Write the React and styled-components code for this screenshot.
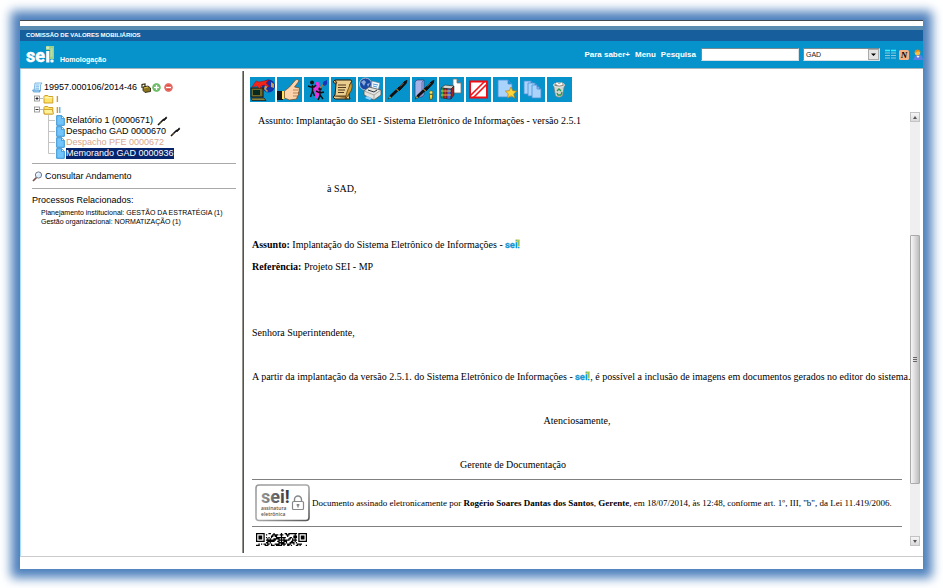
import React from "react";
import styled, { createGlobalStyle, css } from "styled-components";

const sans = '"Liberation Sans", Arial, sans-serif';
const serif = '"Liberation Serif", "Times New Roman", serif';
const logoFont = "Roboto, sans-serif";

const GlobalStyle = createGlobalStyle`
  *, *::before, *::after { box-sizing: border-box; }
  body { margin: 0; background: #fff; color: #000; font: 9px/12px ${sans}; }
  svg { display: block; flex: none; }
  button { padding: 0; border: 0; background: none; font: inherit; color: inherit; cursor: pointer; }
  a { color: inherit; text-decoration: none; }
  ul { margin: 0; padding: 0; list-style: none; }
`;

const Page = styled.div`
  display: flex;
  min-height: 100vh;
  padding: 20px;
`;

const Window = styled.div`
  flex: 1;
  min-width: 0;
  display: flex;
  flex-direction: column;
  background: #fff;
  border-top: 1px solid #404850;
  box-shadow: 0 0 10px 9px #4f81bd;
`;

const Institution = styled.div`
  height: 15px;
  margin-top: 5px;
  padding: 0 6px;
  border-top: 4px solid #5a8bb0;
  background: #165f9c;
  color: #fff;
  font-weight: bold;
  font-size: 6px;
  line-height: 11px;
`;

const Header = styled.header`
  display: flex;
  align-items: center;
  justify-content: space-between;
  height: 28px;
  padding-left: 6px;
  background: #0693cc;
  border-bottom: 1px solid #a3b4bc;
  color: #fff;
  font-weight: bold;
`;

const Brand = styled.div`
  display: flex;
  align-items: flex-end;
  gap: 6px;
  font-size: 7px;
  line-height: 8px;
`;

const Tools = styled.nav`
  display: flex;
  align-items: center;
  gap: 5px;
  font-size: 8px;
`;

const SearchBox = styled.input`
  width: 98px;
  height: 13px;
  padding: 0 2px;
  border: 1px solid #7a8890;
  border-right-color: #d8e0e4;
  border-bottom-color: #d8e0e4;
  border-radius: 0;
  background: #fff;
  font: 7px ${sans};
`;

const SelectWrap = styled.div`
  display: flex;
  align-items: center;
  width: 77px;
  height: 13px;
  margin-left: -1px;
  border: 1px solid #7a8890;
  border-right-color: #d8e0e4;
  border-bottom-color: #d8e0e4;
  background: #fff;
`;

const UnitSelect = styled.select`
  flex: 1;
  min-width: 0;
  height: 11px;
  padding: 0 2px;
  appearance: none;
  border: 0;
  background: transparent;
  color: #222;
  font: 7px/11px ${sans};
`;

const IconRow = styled.div`
  display: flex;
  align-items: center;
  gap: 3px;
`;

const Content = styled.div`
  flex: 1;
  display: flex;
  padding: 2px 0 3px;
  border-left: 1px solid #a8dff2;
  border-bottom: 1px solid #cbcbcb;
  margin-bottom: 12px;
`;

const Sidebar = styled.aside`
  flex: none;
  width: 221px;
  padding: 11px 6px 0 11px;
  white-space: nowrap;
`;

const Line = styled.div`
  display: flex;
  align-items: center;
  height: 11px;
  gap: ${(p) => p.$gap || 0}px;
  margin-left: ${(p) => p.$indent || 0}px;
`;

const DocLink = styled.a`
  margin-right: 3px;
  line-height: 11px;
  ${(p) => p.$muted && css`color: #d9a78e;`}
  ${(p) => p.$selected && css`background: #06246b; color: #fff;`}
`;

const FolderName = styled.span`
  padding-left: 2px;
  color: #7d6270;
`;

const Divider = styled.hr`
  margin: ${(p) => p.$top}px 0 0;
  border: 0;
  border-top: 1px solid #a9a9a9;
`;

const FollowUp = styled.a`
  display: flex;
  align-items: center;
  gap: 2px;
  margin-top: 6px;
  height: 12px;
`;

const Related = styled.section`
  padding-top: 5px;
  ul { padding: 2px 0 0 9px; font-size: 7px; line-height: 9px; }
`;

const Splitter = styled.div`
  flex: none;
  width: 2px;
  background: #55534d;
  border-left: 1px solid #96938c;
`;

const Main = styled.main`
  flex: 1;
  min-width: 0;
  display: flex;
  flex-direction: column;
  padding: 6px 3px 7px 6px;
`;

const Toolbar = styled.div`
  display: flex;
  gap: 2px;
`;

const ToolButton = styled.button`
  width: 25px;
  height: 25px;
  background: #0693cc;
`;

const Viewer = styled.div`
  flex: 1;
  display: flex;
  justify-content: space-between;
  padding-top: 10px;
`;

const Article = styled.article`
  flex: 1;
  min-width: 0;
  padding: 3px 8px 0 2px;
  font: 10px/12px ${serif};
  white-space: nowrap;
`;

const Paragraph = styled.p`
  margin: ${(p) => p.$top ?? 10}px 0 0;
  padding-left: ${(p) => p.$indent || 0}px;
  text-align: ${(p) => (p.$center ? "center" : "left")};
  svg { display: inline-block; vertical-align: -1px; }
`;

const Signature = styled.section`
  display: flex;
  align-items: center;
  gap: 2px;
  height: 48px;
  margin-top: 8px;
  padding-left: 3px;
  border-top: 1px solid #808080;
  border-bottom: 1px solid #808080;
  font-size: 9px;
`;

const CodeHolder = styled.div`
  padding: 6px 0 0 4px;
`;

const Scrollbar = styled.div`
  flex: none;
  display: flex;
  flex-direction: column;
  width: 10px;
  background: #efefef;
`;

const ScrollButton = styled.button`
  display: grid;
  place-items: center;
  height: 10px;
  border: 1px solid #c3c3c3;
  background: linear-gradient(#f6f6f6, #d9d9d9);
`;

const ScrollGap = styled.div`
  flex: ${(p) => p.$share} 0 0;
`;

const Thumb = styled.div`
  flex: 247 0 0;
  display: grid;
  place-items: center;
  border: 1px solid #aaa;
  border-radius: 1px;
  background: linear-gradient(90deg, #f6f6f6, #dedede 45%, #bcbcbc);
`;

function SeiLogo({ width, height, color, accent, dot }) {
  return (
    <svg width={width} height={height} viewBox="0 0 28 19" preserveAspectRatio="xMinYMid meet" overflow="visible" role="img" aria-label="sei!">
      <path d="M20 1h8v13h-4V5h-4z" fill={accent} />
      <text x="0" y="17.4" fontFamily={logoFont} fontWeight="700" fontSize="18" fill={color} stroke={color} strokeWidth=".5">se</text>
      <rect x="20.2" y="6" width="3.2" height="11.5" fill={color} />
      <rect x="20.2" y="1.5" width="3" height="2.5" rx="1" fill={color} opacity=".5" />
      <rect x="24.6" y="3" width="2" height="9" rx="1" fill={dot} opacity=".25" />
      <rect x="24.4" y="14.6" width="3.2" height="3" rx="1" fill={dot} />
    </svg>
  );
}

const Pen = () => (
  <svg width="11" height="10" viewBox="0 0 11 10">
    <path d="M1 9 7 3" stroke="#111" strokeWidth="1.6" />
    <path d="m6 4 3.2-3.2L10 2 7 5z" fill="#111" stroke="#111" strokeWidth=".5" />
    <path d="m2.5 7.4 1-1" stroke="#c7a51e" strokeWidth=".7" />
  </svg>
);

const Folder = ({ open }) => (
  <svg width="11" height="10" viewBox="0 0 11 10">
    <path d="M1 2.5 1.8 1.5h3l1 1h4v6.5H1z" fill="#ffe266" stroke="#c9981a" strokeWidth=".9" />
    {open ? <path d="M.5 4.5h8.7L10.5 9H1.5z" fill="#fff09a" stroke="#c9981a" strokeWidth=".8" />
      : <path d="M1.4 3.8h8" stroke="#fffbd0" />}
  </svg>
);

const Toggle = ({ plus }) => (
  <svg width="9" height="11" viewBox="0 0 9 11">
    <path d="M6 5.5h3" stroke="#bbb" />
    <rect x=".5" y="3" width="5" height="5" fill="#fff" stroke="#888" strokeWidth=".8" />
    <path d={plus ? "M1.5 5.5h3M3 4v3" : "M1.5 5.5h3"} stroke="#000" strokeWidth=".8" />
  </svg>
);

const PageIcon = () => (
  <svg width="9" height="11" viewBox="0 0 9 11">
    <path d="M.7.7h5l2.6 2.6v7H.7z" fill="#72c5fb" stroke="#2588cf" strokeWidth=".9" />
    <path d="M5.5.7v2.8h2.8" fill="#dff3ff" stroke="#2588cf" strokeWidth=".7" />
  </svg>
);

const Branch = ({ last }) => (
  <svg width="7" height="11" viewBox="0 0 7 11">
    <path d={last ? "M.5 0v5.5H7" : "M.5 0v11M.5 5.5H7"} stroke="#c4c4c4" fill="none" />
  </svg>
);

const ProcessIcon = () => (
  <svg width="11" height="11" viewBox="0 0 11 11">
    <path d="M3 1h7L8.5 3v6H2z" fill="#e7f6ff" stroke="#62a8dc" strokeWidth=".8" />
    <path d="M.6 8h6.6L8 10H1.5z" fill="#a5d6f8" stroke="#418fcc" strokeWidth=".7" />
    <path d="M3.8 3h3.5M3.6 4.7H7M3.4 6.3H7" stroke="#5aa6dc" strokeWidth=".7" />
  </svg>
);

const LockedIcon = () => (
  <svg width="10" height="10" viewBox="0 0 10 10">
    <path d="M1 5V1.5L4 1v3" fill="none" stroke="#332b0a" strokeWidth="1.2" />
    <path d="m2 4 5-1 2.5 2v3.5L4 9.5 2 7.5z" fill="#8a7420" stroke="#1e1903" strokeWidth=".8" />
    <path d="m3 5 4-1" stroke="#e6cf5b" strokeWidth=".9" />
  </svg>
);

const RoundIcon = ({ plus }) => (
  <svg width="9" height="9" viewBox="0 0 9 9">
    <circle cx="4.5" cy="4.5" r="4.2" fill={plus ? "#55b04d" : "#e04c43"} />
    <circle cx="4.5" cy="4.5" r="3.3" fill="none" stroke="#fff" strokeOpacity=".35" strokeWidth=".6" />
    <path d={plus ? "M2 4.5h5M4.5 2v5" : "M2 4.5h5"} stroke="#fff" strokeWidth="1.5" />
  </svg>
);

const Magnifier = () => (
  <svg width="11" height="11" viewBox="0 0 11 11">
    <path d="m1 10 3.5-3.5" stroke="#7a5148" strokeWidth="1.7" />
    <circle cx="6.5" cy="4" r="3.1" fill="#dcecff" stroke="#707782" />
    <path d="M4.8 4a1.7 1.7 0 0 1 1.7-1.7" stroke="#fff" fill="none" />
  </svg>
);

const PenShape = () => (
  <g>
    <path d="m3 22 2-3 1.5 1.5z" fill="#e8cf59" stroke="#111" strokeWidth=".5" />
    <path d="m5.5 19.5 8-7.5" stroke="#111" strokeWidth="2.8" />
    <path d="m12.5 11.5 7-7 2.5-1-1 3-6.5 7z" fill="#111" stroke="#111" />
    <path d="m15 9.5 3.5-3.5" stroke="#b9b594" strokeWidth=".7" />
    <path d="m11.5 12 2 2" stroke="#d9b530" />
  </g>
);

const Sheet = ({ x, y, w = 11, h = 13, fill = "#a9d3fa", stroke = "#4a8fd6" }) => (
  <path d={`M${x} ${y}h${w - 4}l4 4v${h - 4}h-${w}zM${x + w - 4} ${y}v4h4`} fill={fill} stroke={stroke} strokeWidth=".8" />
);

const drawings = {
  "Enviar processo": (
    <g>
      <circle cx="18.5" cy="9" r="6.5" fill="#1431a8" />
      <path d="m15 8 3 1-2 3 2 2-1 1-3-3zM21 5l3 2v4l-3-1z" fill="#bd9c56" />
      <rect x="1" y="11" width="12" height="9" fill="#6e6a2c" stroke="#111" />
      <rect x="3" y="13" width="7" height="5" fill="#08291f" />
      <path d="m1 21h13l2 2.5H2z" fill="#8b8543" stroke="#111" strokeWidth=".7" />
      <path d="M2 10 6 4l3 1 10-2-3 3 4 4-6-2-3 1-1 3-3-3z" fill="#f32419" stroke="#a00" strokeWidth=".4" />
    </g>
  ),
  Ciência: (
    <g>
      <path d="M0 14h6v9H0z" fill="#10121f" />
      <path d="M5 14h2.5v8H5z" fill="#ffe25c" />
      <path d="m7.5 14 5-4 6-7c3-1.5 4 1 2 3l-3 4 5 1v3l-1 1v3l-1 1-1 3-7 1-5-2z" fill="#fbd3ac" stroke="#7a4519" strokeWidth=".7" />
      <path d="M16 13h6M16 16h6M16 19h5" stroke="#a2622e" strokeWidth=".7" fill="none" />
    </g>
  ),
  "Atribuir processo": (
    <g>
      <path d="m13 5 1 4 1 5-3 7M11 10l2 9" stroke="#f22bdc" strokeWidth="3" fill="none" />
      <circle cx="8" cy="5.5" r="2" fill="#111" />
      <path d="m4 9 3 1h3l2-2M8.500 8v6l-2 6M8.500 14l2 5" stroke="#111" strokeWidth="1.5" fill="none" />
      <circle cx="16" cy="12" r="1.7" fill="#111" />
      <path d="m12 14 4 2 4-1M16 14v5l-2 4M16 18l3 4" stroke="#111" strokeWidth="1.5" fill="none" />
      <path d="m16 11 4-4" stroke="#a57a36" strokeWidth="1.2" />
      <path d="m19 8 0-3 4-2v4l-2 2z" fill="#1a32b8" />
    </g>
  ),
  "Editar conteúdo": (
    <g>
      <path d="M4 3h16l1 2-2 2-1 12 1 3H4l-2-2 2-2 1-11-3-2z" fill="#e9cd8f" stroke="#2c1c09" />
      <path d="M4 3 6 6l-2 1M3 19h12l1 3" fill="#a87e3c" stroke="#2c1c09" strokeWidth=".8" />
      <path d="M7 8h8M7 10.5h8M7 13h7M7 15.5h6" stroke="#51391c" />
      <path d="m14 22 2-7 4-10c2 2 1 7 0 9l-4 6z" fill="#d19a32" stroke="#53360b" strokeWidth=".7" />
    </g>
  ),
  "Imprimir web": (
    <g>
      <circle cx="7.5" cy="7" r="6" fill="#1746a3" stroke="#b8bdd0" />
      <path d="m3 5 3-2 2 2-2 4zM9 7l3-1-2 4z" fill="#8ba9d6" />
      <path d="m13 12 1-8 8 2-2 8z" fill="#f7fbff" stroke="#687688" strokeWidth=".6" />
      <path d="m6 14 5-4 12 3v5l-7 5-10-5z" fill="#e4e4df" stroke="#4f5357" strokeWidth=".8" />
      <path d="m6 14 10 4 7-5M16 18v5" stroke="#8a8f91" strokeWidth=".7" fill="none" />
      <path d="m10 13 6 2 3-2" fill="none" stroke="#29323a" />
      <path d="m9 19 5 2-2 2-5-2z" fill="#8fd0ff" />
      <path d="m15 7 5 1M15 9l4 1" stroke="#4d9ce0" />
    </g>
  ),
  "Assinar documento": <PenShape />,
  "Assinatura externa": (
    <g>
      <path d="M3 5 5 3h7v15l-2 2H3z" fill="#a6b1e6" stroke="#3c3e73" strokeWidth=".7" />
      <path d="M10 5v15M10 5l2-2" stroke="#4c508f" strokeWidth=".7" fill="none" />
      <PenShape />
      <circle cx="19" cy="15.5" r="1.7" fill="#ffe35a" stroke="#4d3d00" strokeWidth=".5" />
      <path d="M17.5 17.5h3v3h-.5v2h-2v-2h-.5z" fill="#ffd735" stroke="#4d3d00" strokeWidth=".6" />
    </g>
  ),
  "Adicionar aos modelos": (
    <g>
      <Sheet x={14} y={2} w={8} h={14} fill="#fff" stroke="#777" />
      <path d="m2 11 4-3 9 1-3 3z" fill="#d7d7cf" stroke="#222" strokeWidth=".6" />
      <path d="M2 11h3v10H2z" fill="#2c9e44" stroke="#122" strokeWidth=".5" />
      <path d="M5 11.5h3v10H5z" fill="#d41e24" stroke="#122" strokeWidth=".5" />
      <path d="M8 12h4v10H8z" fill="#4d63d4" stroke="#122" strokeWidth=".5" />
      <path d="m12 12 3-3v9l-3 4z" fill="#a32024" stroke="#122" strokeWidth=".5" />
      <path d="M2 14h10M2 18h10" stroke="#f3dc61" strokeWidth=".8" />
    </g>
  ),
  "Cancelar documento": (
    <g>
      <rect x="4" y="4.5" width="17" height="16" fill="#fff" stroke="#f20d12" strokeWidth="2" />
      <path d="M4.5 18.5 18.5 4.5M7.5 20.5 21 7" stroke="#ef1419" strokeWidth="1.6" />
    </g>
  ),
  Favorito: (
    <g>
      <Sheet x={5} y={3} w={14} h={17} />
      <path d="m18 10 1.7 3.7 4 .4-3 2.8.9 4.1-3.6-2.2-3.6 2.2.9-4.1-3-2.8 4-.4z" fill="#ffd63a" stroke="#b87f0f" strokeWidth=".7" />
    </g>
  ),
  "Duplicar documento": (
    <g>
      <Sheet x={4} y={4} />
      <Sheet x={8} y={6} />
      <Sheet x={12} y={8} w={9} />
    </g>
  ),
  "Excluir documento": (
    <g>
      <path d="m6.5 8 2 11c2 1.5 5 1.5 7 0l2-11z" fill="#cfd6d2" stroke="#717d7b" strokeWidth=".7" />
      <ellipse cx="12" cy="8" rx="5.5" ry="2" fill="#7f8a86" stroke="#e9eeee" />
      <path d="m8 7 2-2 2 2 3-2 1 3-4 1z" fill="#fff" stroke="#9b7e64" strokeWidth=".5" />
      <path d="m10 14 2-2 2 2m1 1-1 3h-3l-1-2" stroke="#289847" strokeWidth="1.3" fill="none" />
    </g>
  ),
};

const Stamp = () => (
  <svg width="55" height="38" viewBox="0 0 55 38" role="img" aria-label="sei! assinatura eletrônica">
    <defs>
      <linearGradient id="stampEdge" x1="0" x2="1" y1="0" y2="1">
        <stop stopColor="#999" /><stop offset=".5" stopColor="#aaa" /><stop offset="1" stopColor="#555" />
      </linearGradient>
      <linearGradient id="stampInk"><stop stopColor="#999" /><stop offset="1" stopColor="#333" /></linearGradient>
    </defs>
    <rect x="1" y="1" width="53" height="35.5" rx="3" fill="#fff" stroke="url(#stampEdge)" strokeWidth="1.6" />
    <text x="6" y="19" fontFamily={logoFont} fontWeight="700" fontSize="18" fill="url(#stampInk)">sei!</text>
    <g fontFamily="Open Sans, sans-serif" fontWeight="600" fontSize="5" fill="#555">
      <text x="6" y="26">assinatura</text>
      <text x="6" y="32">eletrônica</text>
    </g>
    <path d="M39.5 18v-2.5a3.5 3.5 0 0 1 7 0V18" fill="none" stroke="#888" strokeWidth="1.4" />
    <rect x="37.5" y="17.5" width="11" height="8" rx="1" fill="#fff" stroke="#888" strokeWidth="1.2" />
    <path d="M43 20v3.5M41.6 20.8h2.8" stroke="#777" strokeWidth="1.2" />
  </svg>
);

const finder = (x) => `M${x} 0h7v7h-7zM${x + 1} 1v5h5v-5zM${x + 2} 2h3v3h-3z`;
const codeCells = Array.from({ length: 410 }, (_, i) => [i % 41, Math.floor(i / 41)])
  .filter(([x, y]) => (y > 7 || (x > 7 && x < 33)) && ((x * 17 + y * 29 + x * y * 7 + ((x * x) % 11) * 3) % 13) < 7);

const QrCode = () => (
  <svg width="51" height="13" viewBox="0 0 41 10" preserveAspectRatio="none" role="img" aria-label="QR Code">
    <path fillRule="evenodd" d={finder(0) + finder(34) + codeCells.map(([x, y]) => `M${x} ${y}h1v1h-1z`).join("")} />
  </svg>
);

const documents = [
  { label: "Relatório 1 (0000671)", signed: true },
  { label: "Despacho GAD 0000670", signed: true },
  { label: "Despacho PFE 0000672", muted: true },
  { label: "Memorando GAD 0000936", selected: true },
];

const InlineLogo = () => <SeiLogo width={15} height={10} color="#1597d5" accent="#b8cf3f" dot="#1597d5" />;

const HeaderIcons = () => (
  <IconRow>
    <button aria-label="Controle de processos">
      <svg width="11" height="11" viewBox="0 0 11 11">
        <path d="M0 1.5h5M6 1.5h5" stroke="#39f0ff" strokeWidth="1.5" />
        <path d="M0 4h5M6 4h5M0 6.5h5M6 6.5h5M0 9h5M6 9h5" stroke="#8cc8dc" />
      </svg>
    </button>
    <button aria-label="Novidades">
      <svg width="10" height="10" viewBox="0 0 10 10">
        <rect width="10" height="10" rx="1.5" fill="#f5b083" />
        <text x="5" y="8" textAnchor="middle" fontFamily={serif} fontWeight="bold" fontStyle="italic" fontSize="9">N</text>
      </svg>
    </button>
    <button aria-label="Usuário">
      <svg width="11" height="11" viewBox="0 0 11 11">
        <path d="m1 11 2-4 2-1h3l2 1 1 4z" fill="#5b7de6" />
        <path d="m4.5 7 1.5 2 1.5-2z" fill="#fff" />
        <circle cx="5.5" cy="3.8" r="2.7" fill="#fbbf45" />
        <path d="M2.8 4C2-.5 8.5-.5 8.500 3.5L6 2.2z" fill="#e18a1b" />
      </svg>
    </button>
  </IconRow>
);

export default function App() {
  return (
    <Page>
      <GlobalStyle />
      <Window>
        <Institution>COMISSÃO DE VALORES MOBILIÁRIOS</Institution>
        <Header>
          <Brand>
            <SeiLogo width={28} height={19} color="#fff" accent="#9fd08a" dot="#fff" />
            <span>Homologação</span>
          </Brand>
          <Tools>
            <a href="#saber">Para saber+</a>
            <a href="#menu">Menu</a>
            <label htmlFor="search">Pesquisa</label>
            <SearchBox id="search" type="text" />
            <SelectWrap>
              <UnitSelect aria-label="Unidade" defaultValue="GAD">
                <option>GAD</option>
              </UnitSelect>
              <svg width="11" height="11" viewBox="0 0 11 11">
                <rect x=".5" y=".5" width="10" height="10" fill="#e4e4e4" stroke="#aaa" />
                <path d="M3 4.5h5L5.5 7z" />
              </svg>
            </SelectWrap>
            <HeaderIcons />
          </Tools>
        </Header>
        <Content>
          <Sidebar>
            <Line $gap={1}>
              <ProcessIcon />
              <DocLink href="#processo">19957.000106/2014-46</DocLink>
              <LockedIcon />
              <IconRow><RoundIcon plus /><RoundIcon /></IconRow>
            </Line>
            <Line $indent={2}><Toggle plus /><Folder /><FolderName>I</FolderName></Line>
            <Line $indent={2}><Toggle /><Folder open /><FolderName>II</FolderName></Line>
            {documents.map((d, i) => (
              <Line key={d.label} $indent={16} $gap={1}>
                <Branch last={i === documents.length - 1} />
                <PageIcon />
                <DocLink href="#documento" $muted={d.muted} $selected={d.selected}>{d.label}</DocLink>
                {d.signed && <Pen />}
              </Line>
            ))}
            <Divider $top={4} />
            <FollowUp href="#andamento"><Magnifier />Consultar Andamento</FollowUp>
            <Divider $top={6} />
            <Related>
              <div>Processos Relacionados:</div>
              <ul>
                <li><a href="#r1">Planejamento institucional: GESTÃO DA ESTRATÉGIA (1)</a></li>
                <li><a href="#r2">Gestão organizacional: NORMATIZAÇÃO (1)</a></li>
              </ul>
            </Related>
          </Sidebar>
          <Splitter />
          <Main>
            <Toolbar>
              {Object.entries(drawings).map(([name, art]) => (
                <ToolButton key={name} aria-label={name}>
                  <svg width="25" height="25" viewBox="0 0 25 25">{art}</svg>
                </ToolButton>
              ))}
            </Toolbar>
            <Viewer>
              <Article>
                <Paragraph $top={0} $indent={6}>Assunto: Implantação do SEI - Sistema Eletrônico de Informações - versão 2.5.1</Paragraph>
                <Paragraph $top={56} $indent={75}>à SAD,</Paragraph>
                <Paragraph $top={44}><b>Assunto:</b> Implantação do Sistema Eletrônico de Informações - <InlineLogo /></Paragraph>
                <Paragraph><b>Referência:</b> Projeto SEI - MP</Paragraph>
                <Paragraph $top={54}>Senhora Superintendente,</Paragraph>
                <Paragraph $top={32}>A partir da implantação da versão 2.5.1. do Sistema Eletrônico de Informações - <InlineLogo />, é possível a inclusão de imagens em documentos gerados no editor do sistema.</Paragraph>
                <Paragraph $top={32} $center>Atenciosamente,</Paragraph>
                <Paragraph $top={32} $indent={208}>Gerente de Documentação</Paragraph>
                <Signature>
                  <Stamp />
                  <span>Documento assinado eletronicamente por <b>Rogério Soares Dantas dos Santos</b>, <b>Gerente</b>, em 18/07/2014, às 12:48, conforme art. 1º, III, "b", da Lei 11.419/2006.</span>
                </Signature>
                <CodeHolder><QrCode /></CodeHolder>
              </Article>
              <Scrollbar>
                <ScrollButton aria-label="Rolar para cima"><svg width="4" height="3" viewBox="0 0 4 3"><path d="M0 3h4L2 0z" fill="#555" /></svg></ScrollButton>
                <ScrollGap $share={113} />
                <Thumb><svg width="4" height="5" viewBox="0 0 4 5"><path d="M0 .5h4M0 2.5h4M0 4.5h4" stroke="#666" /></svg></Thumb>
                <ScrollGap $share={52} />
                <ScrollButton aria-label="Rolar para baixo"><svg width="4" height="3" viewBox="0 0 4 3"><path d="M0 0h4L2 3z" fill="#555" /></svg></ScrollButton>
              </Scrollbar>
            </Viewer>
          </Main>
        </Content>
      </Window>
    </Page>
  );
}
